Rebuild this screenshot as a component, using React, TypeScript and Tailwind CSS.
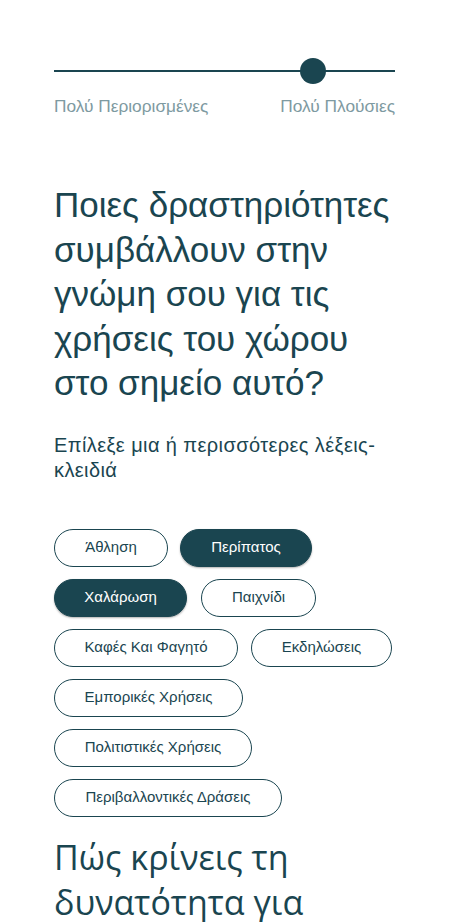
const activities = [
  { label: 'Άθληση', selected: false },
  { label: 'Περίπατος', selected: true },
  { label: 'Χαλάρωση', selected: true },
  { label: 'Παιχνίδι', selected: false },
  { label: 'Καφές Και Φαγητό', selected: false },
  { label: 'Εκδηλώσεις', selected: false },
  { label: 'Εμπορικές Χρήσεις', selected: false },
  { label: 'Πολιτιστικές Χρήσεις', selected: false },
  { label: 'Περιβαλλοντικές Δράσεις', selected: false },
];

const App = () => {
  return (
    <div className="min-h-screen bg-white text-[#1a4550]" style={{ fontFamily: '"Liberation Sans", Arial, sans-serif' }}>
      <div className="px-[54px] pt-[58px] overflow-hidden h-[922px]">
        {/* Slider */}
        <div className="relative h-[26px] flex items-center">
          <div className="w-full h-[2px] bg-[#1a4550]" />
          <div className="absolute left-[246px] top-0 w-[26px] h-[26px] rounded-full bg-[#1a4550]" />
        </div>
        <div className="flex justify-between mt-[10px] text-[17.3px] leading-[24px] text-[#7e9aa1]">
          <span>Πολύ Περιορισμένες</span>
          <span>Πολύ Πλούσιες</span>
        </div>

        {/* Question */}
        <h1 className="mt-[65px] text-[35px] leading-[44.5px] font-normal">
          Ποιες δραστηριότητες συμβάλλουν στην γνώμη σου για τις χρήσεις του χώρου στο σημείο αυτό?
        </h1>
        <p className="mt-[27px] text-[20px] leading-[25px] tracking-[0.4px]">
          Επίλεξε μια ή περισσότερες λέξεις-κλειδιά
        </p>

        <div className="mt-[46px] flex flex-col gap-[12px] items-start">
          <div className="flex gap-[12px]">
            <Chip {...activities[0]} className="w-[114px]" />
            <Chip {...activities[1]} className="w-[132px]" />
          </div>
          <div className="flex gap-[14px]">
            <Chip {...activities[2]} className="w-[133px]" />
            <Chip {...activities[3]} className="w-[115px]" />
          </div>
          <div className="flex gap-[13px]">
            <Chip {...activities[4]} className="w-[184px]" />
            <Chip {...activities[5]} className="w-[141px]" />
          </div>
          <Chip {...activities[6]} className="w-[189px]" />
          <Chip {...activities[7]} className="w-[198px]" />
          <Chip {...activities[8]} className="w-[228px]" />
        </div>

        <h2
          className="mt-[18px] text-[34px] leading-[45px] font-normal"
          style={{ fontFamily: '"Open Sans", "Noto Sans", sans-serif' }}
        >
          Πώς κρίνεις τη δυνατότητα για
        </h2>
      </div>
    </div>
  );
};

const Chip = ({ label, selected, className }: { label: string; selected: boolean; className?: string }) => (
  <button
    className={`h-[38px] rounded-full border border-[#1a4550] text-[15px] flex items-center justify-center ${
      selected ? 'bg-[#1a4550] text-white shadow-[0_1px_2px_rgba(0,0,0,0.3)]' : 'bg-white text-[#1a4550]'
    } ${className ?? ''}`}
  >
    {label}
  </button>
);

export default App;
